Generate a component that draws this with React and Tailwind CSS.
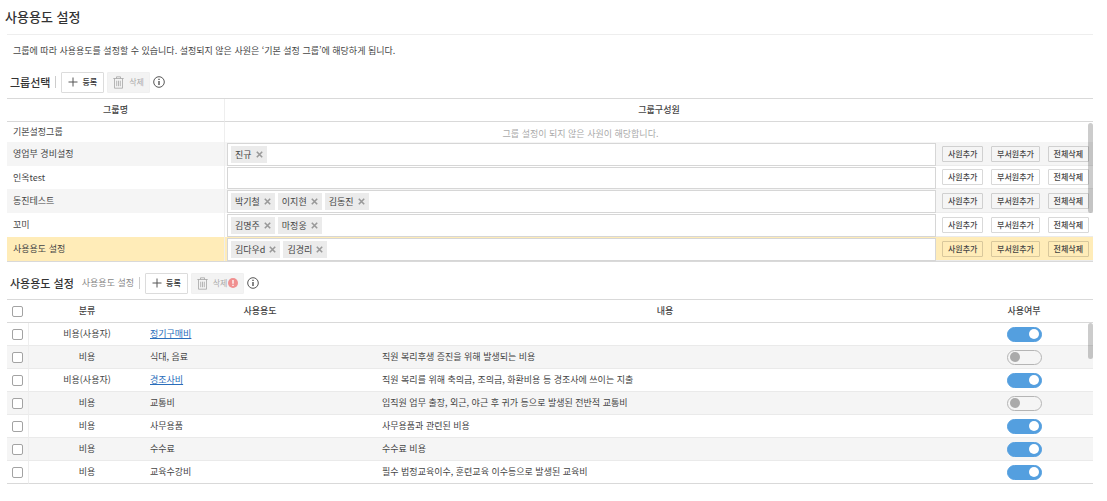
import { useState } from 'react';

const initialGroups = [
  { name: '기본설정그룹', isDefault: true, members: [] },
  { name: '영업부 경비설정', members: ['진규'] },
  { name: '인옥test', members: [] },
  { name: '동진테스트', members: ['박기철', '이지현', '김동진'] },
  { name: '꼬미', members: ['김명주', '마정웅'] },
  { name: '사용용도 설정', members: ['김다우d', '김경리'], selected: true },
];

const initialUsages = [
  { type: '비용(사용자)', name: '정기구매비', desc: '', link: true, enabled: true },
  { type: '비용', name: '식대, 음료', desc: '직원 복리후생 증진을 위해 발생되는 비용', enabled: false },
  { type: '비용(사용자)', name: '경조사비', desc: '직원 복리를 위해 축의금, 조의금, 화환비용 등 경조사에 쓰이는 지출', link: true, enabled: true },
  { type: '비용', name: '교통비', desc: '임직원 업무 출장, 외근, 야근 후 귀가 등으로 발생된 전반적 교통비', enabled: false },
  { type: '비용', name: '사무용품', desc: '사무용품과 관련된 비용', enabled: true },
  { type: '비용', name: '수수료', desc: '수수료 비용', enabled: true },
  { type: '비용', name: '교육수강비', desc: '필수 법정교육이수, 훈련교육 이수등으로 발생된 교육비', enabled: true },
];

function PlusIcon() {
  return (
    <svg width="10" height="10" viewBox="0 0 10 10" fill="none" stroke="#555" aria-hidden="true">
      <path d="M5 0.5v9M0.5 5h9" />
    </svg>
  );
}

function TrashIcon() {
  return (
    <svg width="11" height="13" viewBox="0 0 11 13" fill="none" stroke="#a5a5a5" strokeWidth="0.8" aria-hidden="true">
      <path d="M0.3 2.5h10.4M3.5 2.3V0.8h4v1.5M1.5 2.5v9.7h8V2.5M3.7 4.7v5.5M5.5 4.7v5.5M7.3 4.7v5.5" />
    </svg>
  );
}

function InfoIcon() {
  return (
    <svg width="12" height="12" viewBox="0 0 12 12" fill="none" stroke="#444" aria-hidden="true">
      <circle cx="6" cy="6" r="5.3" strokeWidth="0.9" />
      <path d="M6 5v4" strokeWidth="1.3" />
      <path d="M6 2.8v1.3" strokeWidth="1.3" />
    </svg>
  );
}

function AlertIcon() {
  return (
    <svg className="ml-px" width="10" height="10" viewBox="0 0 10 10" aria-hidden="true">
      <circle cx="5" cy="5" r="5" fill="#f09090" />
      <path d="M5 2v3.7M5 6.8v1.2" stroke="#fff" strokeWidth="1.3" />
    </svg>
  );
}

function Toolbar({ title, subtitle, alert }) {
  return (
    <div className="flex h-[22px] items-center pl-[3px]">
      <h2 className="text-[11px] font-medium text-[#333]">{title}</h2>
      {subtitle && <span className="ml-2 text-[9px] text-[#888]">{subtitle}</span>}
      <span className="mx-[5px] h-3 w-px bg-[#ccc]" />
      <button type="button" className="flex h-[21px] items-center gap-1 rounded-[1px] border border-[#dcdcdc] bg-white px-[6px] text-[8px] font-medium text-[#333]">
        <PlusIcon />
        등록
      </button>
      <button type="button" disabled className="ml-[3px] flex h-[21px] items-center rounded-[1px] border border-[#f0f0f0] bg-[#f3f3f3] px-[5px] text-[8px] text-[#aaa]">
        <TrashIcon />
        <span className="ml-[5px]">삭제</span>
        {alert && <AlertIcon />}
      </button>
      <button type="button" aria-label="도움말" className="ml-[3px]">
        <InfoIcon />
      </button>
    </div>
  );
}

function Chip({ label, onRemove }) {
  return (
    <span className="flex h-[17px] items-center gap-1 bg-[#ebebeb] px-1 text-[9px] text-[#444]">
      {label}
      <button type="button" aria-label={`${label} 삭제`} onClick={onRemove}>
        <svg width="7" height="7" viewBox="0 0 7 7" fill="none" stroke="#999" strokeWidth="1.6">
          <path d="M0.8 0.8l5.4 5.4M6.2 0.8L0.8 6.2" />
        </svg>
      </button>
    </span>
  );
}

function SmallButton({ children, onClick }) {
  return (
    <button type="button" onClick={onClick} className="h-4 rounded-[1px] border border-black/15 px-[5px] text-[8px] leading-[14px] font-medium whitespace-nowrap text-[#444]">
      {children}
    </button>
  );
}

function Checkbox({ label }) {
  return (
    <input
      type="checkbox"
      aria-label={label}
      className="block size-[11px] appearance-none rounded-[2px] border border-[#a3a3a3] bg-white checked:bg-[#549fdf]"
    />
  );
}

function Toggle({ label, checked, onChange }) {
  return (
    <input
      type="checkbox"
      role="switch"
      aria-label={label}
      checked={checked}
      onChange={onChange}
      className="mx-auto flex h-[15px] w-[35px] appearance-none items-center rounded-full border border-[#b5b5b5] bg-transparent px-[2px] before:size-[10px] before:rounded-full before:bg-[#aaa] checked:justify-end checked:border-[#549fdf] checked:bg-[#549fdf] checked:before:bg-white"
    />
  );
}

function App() {
  const [groups, setGroups] = useState(initialGroups);
  const [usages, setUsages] = useState(initialUsages);

  const setMembers = (index, members) => {
    setGroups(groups.map((g, i) => (i === index ? { ...g, members } : g)));
  };

  const toggleUsage = (index) => {
    setUsages(usages.map((u, i) => (i === index ? { ...u, enabled: !u.enabled } : u)));
  };

  const rowColor = (index, selected) => {
    if (selected) return 'bg-[#ffecb8]';
    return index % 2 ? 'bg-[#f5f5f5]' : 'bg-white';
  };

  return (
    <main lang="ko" className="bg-white pr-[14px] pl-[7px] font-['Noto_Sans_CJK_KR',sans-serif] text-[9px] leading-4 text-[#444]">
      <h1 className="-ml-[2px] pt-[7px] pb-[7px] text-[13px] leading-5 font-medium text-[#333]">사용용도 설정</h1>
      <hr className="border-[#eee]" />
      <p className="px-[6px] pt-2 pb-3">
        그룹에 따라 사용용도를 설정할 수 있습니다. 설정되지 않은 사원은 ‘기본 설정 그룹’에 해당하게 됩니다.
      </p>

      {/* 그룹 목록 */}
      <section>
        <Toolbar title="그룹선택" />
        <div className="relative mt-[5px]">
          <table className="w-full table-fixed border-separate border-spacing-0 border-y border-[#d9d9d9]">
            <colgroup>
              <col className="w-[218px]" />
              <col />
              <col className="w-[157px]" />
            </colgroup>
            <thead>
              <tr className="h-[23px]">
                <th className="border-r border-b border-r-[#eee] border-b-[#d9d9d9] font-medium">그룹명</th>
                <th colSpan={2} className="border-b border-[#d9d9d9] font-medium">그룹구성원</th>
              </tr>
            </thead>
            <tbody>
              {groups.map((group, i) => (
                <tr key={group.name} className={rowColor(i, group.selected)}>
                  <td className="border-r border-[#eee] px-[6px]">{group.name}</td>
                  {group.isDefault ? (
                    <>
                      <td className="h-5 pt-1 text-center text-[#aaa]">그룹 설정이 되지 않은 사원이 해당합니다.</td>
                      <td />
                    </>
                  ) : (
                    <>
                      <td className="pt-px pl-[2px]">
                        <div className="flex min-h-[22px] items-center gap-[3px] border border-[#d6d6d6] bg-white px-[3px] py-[2px]">
                          {group.members.map((member) => (
                            <Chip
                              key={member}
                              label={member}
                              onRemove={() => setMembers(i, group.members.filter((m) => m !== member))}
                            />
                          ))}
                          <input type="text" aria-label={`${group.name} 구성원`} className="h-4 min-w-0 flex-1 bg-transparent outline-none" />
                        </div>
                      </td>
                      <td className="border-b border-[#ebebeb] pr-1 pl-[6px]">
                        <div className="flex justify-between">
                          <SmallButton>사원추가</SmallButton>
                          <SmallButton>부서원추가</SmallButton>
                          <SmallButton onClick={() => setMembers(i, [])}>전체삭제</SmallButton>
                        </div>
                      </td>
                    </>
                  )}
                </tr>
              ))}
            </tbody>
          </table>
          <div className="absolute top-[25px] right-0 h-[90px] w-[5px] rounded-full bg-black/20" />
        </div>
      </section>

      {/* 사용용도 목록 */}
      <section className="pt-[10px]">
        <Toolbar title="사용용도 설정" subtitle="사용용도 설정" alert />
        <div className="relative mt-[5px]">
          <table className="w-full table-fixed border-separate border-spacing-0 border-t border-[#d9d9d9]">
            <colgroup>
              <col className="w-[22px]" />
              <col className="w-[116px]" />
              <col className="w-[230px]" />
              <col />
              <col className="w-[138px]" />
            </colgroup>
            <thead>
              <tr className="h-[23px] *:border-b *:border-[#d9d9d9] *:font-medium">
                <th className="pl-[5px]"><Checkbox label="전체 선택" /></th>
                <th>분류</th>
                <th>사용용도</th>
                <th>내용</th>
                <th>사용여부</th>
              </tr>
            </thead>
            <tbody>
              {usages.map((usage, i) => (
                <tr key={usage.name} className={`h-[23px] *:border-b *:border-b-[#eaeaea] last:*:border-b-[#d9d9d9] ${rowColor(i)}`}>
                  <td className="border-r border-r-[#eee] pl-[5px]"><Checkbox label={`${usage.name} 선택`} /></td>
                  <td className="text-center">{usage.type}</td>
                  <td className="pl-[5px]">
                    {usage.link ? <a href="#" className="text-[#2a6ebb] underline">{usage.name}</a> : usage.name}
                  </td>
                  <td className="pl-[7px]">{usage.desc}</td>
                  <td><Toggle label={`${usage.name} 사용여부`} checked={usage.enabled} onChange={() => toggleUsage(i)} /></td>
                </tr>
              ))}
            </tbody>
          </table>
          <div className="absolute top-6 right-0 h-9 w-[5px] rounded-full bg-black/20" />
        </div>
      </section>
    </main>
  );
}

export default App;
